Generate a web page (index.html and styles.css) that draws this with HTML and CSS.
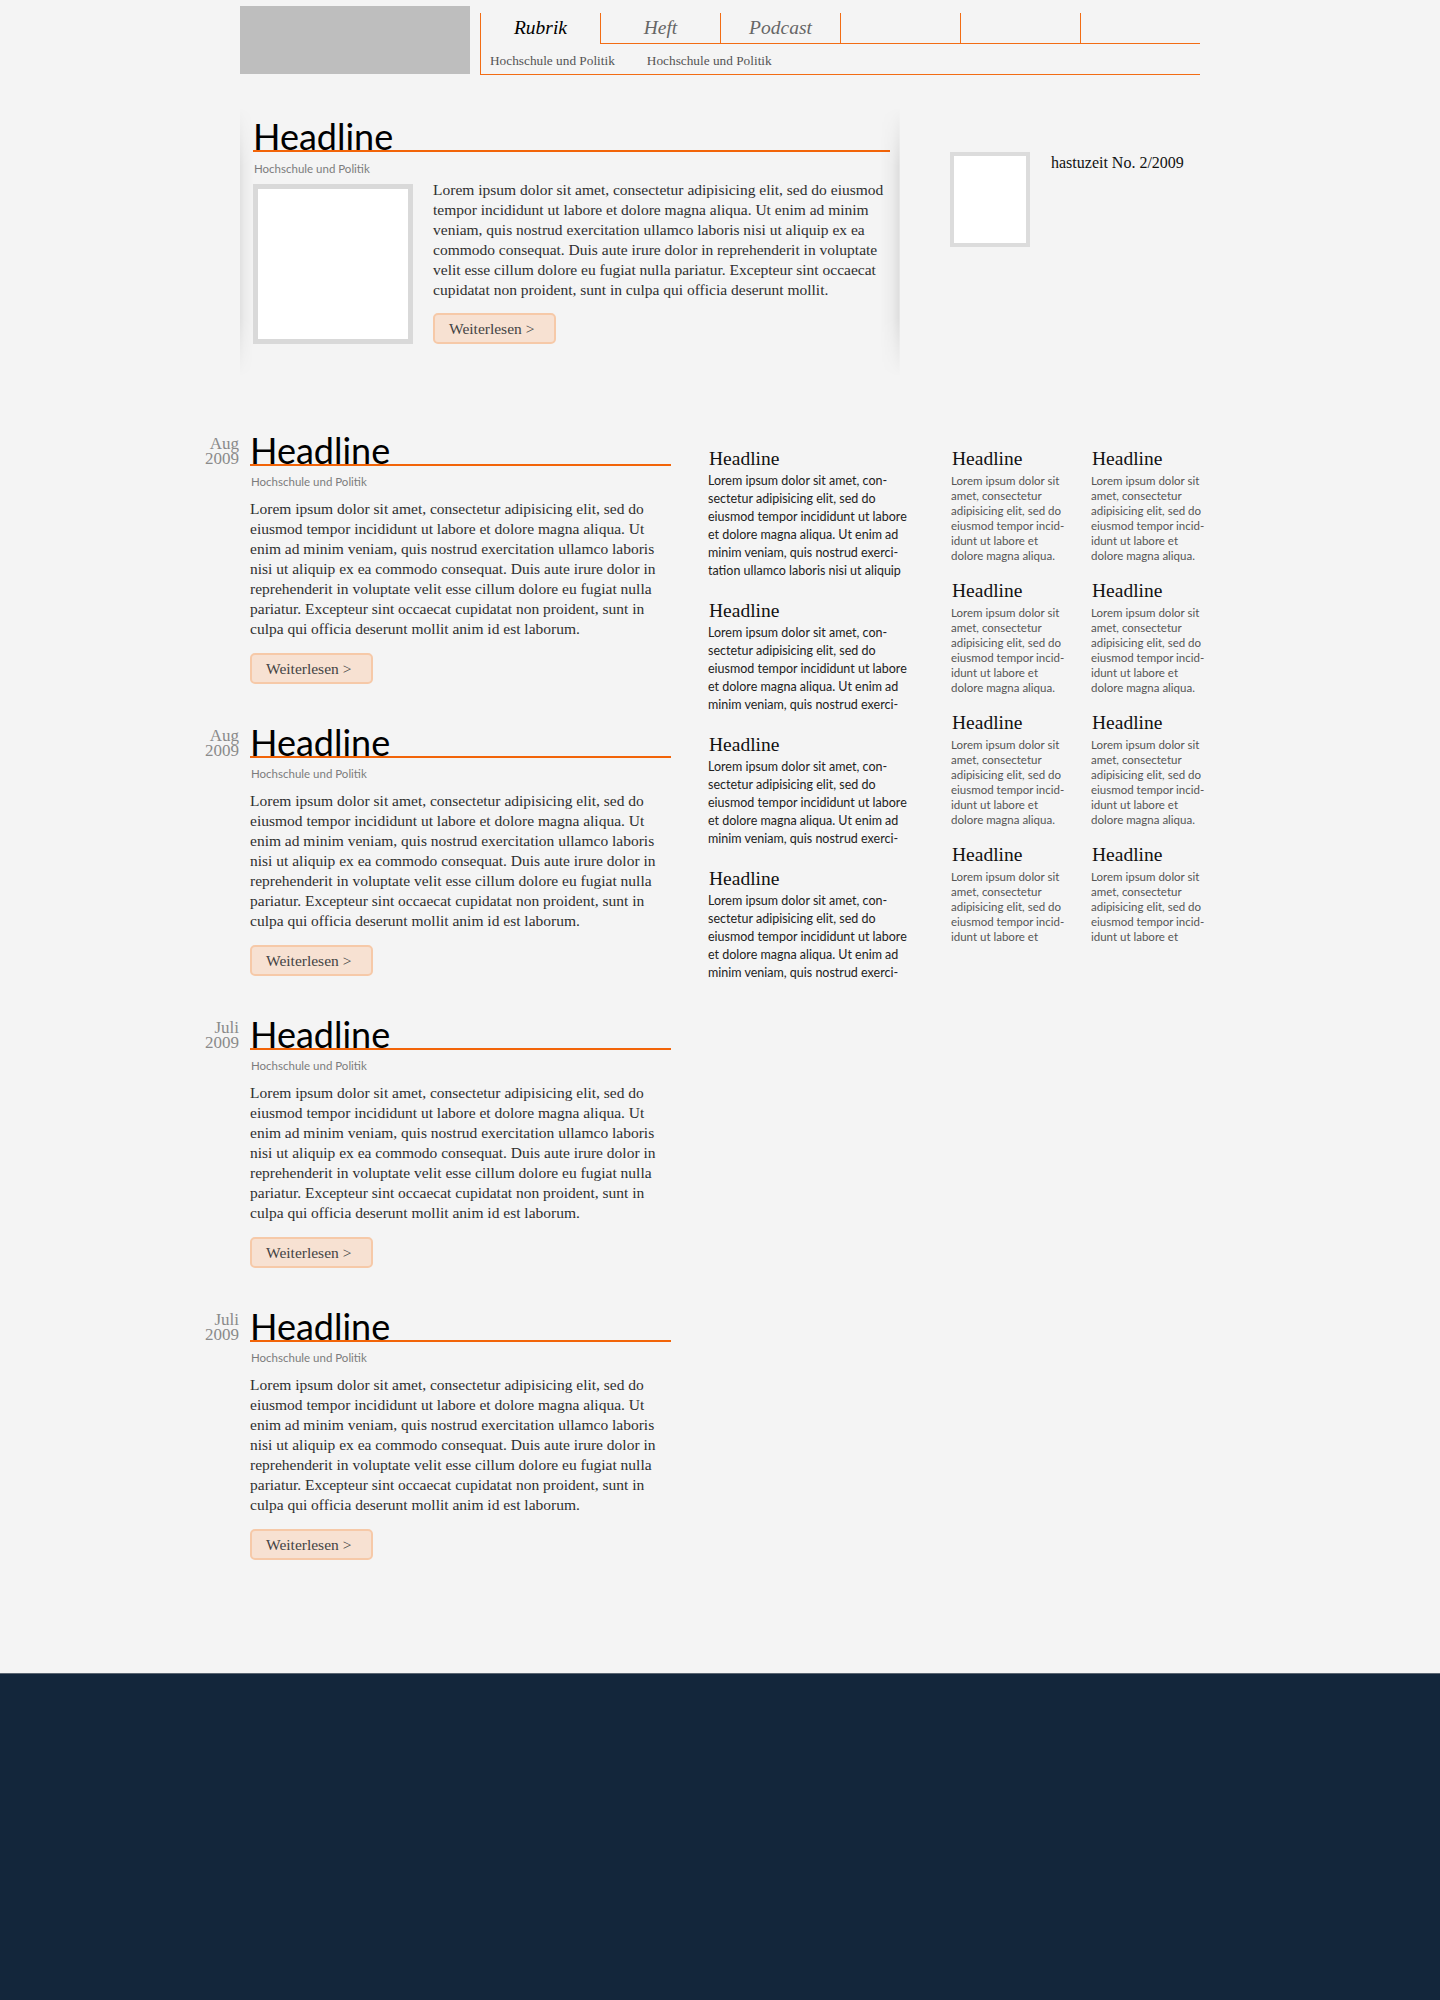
FILE: index.html
```html
<!DOCTYPE html>
<html lang="de">
<head>
<meta charset="utf-8">
<title>hastuzeit</title>
<link rel="stylesheet" href="styles.css">
</head>
<body>
<div class="page">
  <header class="masthead">
    <div class="logo"></div>
    <nav class="nav">
      <ul class="tabs">
        <li class="tab tab--active">Rubrik</li>
        <li class="tab">Heft</li>
        <li class="tab">Podcast</li>
        <li class="tab"></li>
        <li class="tab"></li>
        <li class="tab"></li>
      </ul>
      <div class="subnav">
        <a class="subnav-link">Hochschule und Politik</a>
        <a class="subnav-link">Hochschule und Politik</a>
      </div>
    </nav>
  </header>

  <section class="top">
    <article class="feature">
      <h2 class="headline">Headline</h2>
      <p class="kicker">Hochschule und Politik</p>
      <div class="feature-body">
        <div class="photo"></div>
        <div class="feature-text">
          <p class="copy">Lorem ipsum dolor sit amet, consectetur adipisicing elit, sed do eiusmod tempor incididunt ut labore et dolore magna aliqua. Ut enim ad minim veniam, quis nostrud exercitation ullamco laboris nisi ut aliquip ex ea commodo consequat. Duis aute irure dolor in reprehenderit in voluptate velit esse cillum dolore eu fugiat nulla pariatur. Excepteur sint occaecat cupidatat non proident, sunt in culpa qui officia deserunt mollit.</p>
          <a class="more">Weiterlesen &gt;</a>
        </div>
      </div>
    </article>
    <aside class="issue">
      <div class="cover"></div>
      <p class="issue-title">hastuzeit No. 2/2009</p>
    </aside>
  </section>

  <main class="main">
    <div class="stream">
      <article class="post">
        <div class="date">Aug<br>2009</div>
        <div class="post-body">
          <h2 class="headline">Headline</h2>
          <p class="kicker">Hochschule und Politik</p>
          <p class="copy">Lorem ipsum dolor sit amet, consectetur adipisicing elit, sed do eiusmod tempor incididunt ut labore et dolore magna aliqua. Ut enim ad minim veniam, quis nostrud exercitation ullamco laboris nisi ut aliquip ex ea commodo consequat. Duis aute irure dolor in reprehenderit in voluptate velit esse cillum dolore eu fugiat nulla pariatur. Excepteur sint occaecat cupidatat non proident, sunt in culpa qui officia deserunt mollit anim id est laborum.</p>
          <a class="more">Weiterlesen &gt;</a>
        </div>
      </article>
      <article class="post">
        <div class="date">Aug<br>2009</div>
        <div class="post-body">
          <h2 class="headline">Headline</h2>
          <p class="kicker">Hochschule und Politik</p>
          <p class="copy">Lorem ipsum dolor sit amet, consectetur adipisicing elit, sed do eiusmod tempor incididunt ut labore et dolore magna aliqua. Ut enim ad minim veniam, quis nostrud exercitation ullamco laboris nisi ut aliquip ex ea commodo consequat. Duis aute irure dolor in reprehenderit in voluptate velit esse cillum dolore eu fugiat nulla pariatur. Excepteur sint occaecat cupidatat non proident, sunt in culpa qui officia deserunt mollit anim id est laborum.</p>
          <a class="more">Weiterlesen &gt;</a>
        </div>
      </article>
      <article class="post">
        <div class="date">Juli<br>2009</div>
        <div class="post-body">
          <h2 class="headline">Headline</h2>
          <p class="kicker">Hochschule und Politik</p>
          <p class="copy">Lorem ipsum dolor sit amet, consectetur adipisicing elit, sed do eiusmod tempor incididunt ut labore et dolore magna aliqua. Ut enim ad minim veniam, quis nostrud exercitation ullamco laboris nisi ut aliquip ex ea commodo consequat. Duis aute irure dolor in reprehenderit in voluptate velit esse cillum dolore eu fugiat nulla pariatur. Excepteur sint occaecat cupidatat non proident, sunt in culpa qui officia deserunt mollit anim id est laborum.</p>
          <a class="more">Weiterlesen &gt;</a>
        </div>
      </article>
      <article class="post">
        <div class="date">Juli<br>2009</div>
        <div class="post-body">
          <h2 class="headline">Headline</h2>
          <p class="kicker">Hochschule und Politik</p>
          <p class="copy">Lorem ipsum dolor sit amet, consectetur adipisicing elit, sed do eiusmod tempor incididunt ut labore et dolore magna aliqua. Ut enim ad minim veniam, quis nostrud exercitation ullamco laboris nisi ut aliquip ex ea commodo consequat. Duis aute irure dolor in reprehenderit in voluptate velit esse cillum dolore eu fugiat nulla pariatur. Excepteur sint occaecat cupidatat non proident, sunt in culpa qui officia deserunt mollit anim id est laborum.</p>
          <a class="more">Weiterlesen &gt;</a>
        </div>
      </article>
    </div>

    <div class="briefs">
      <div class="brief">
        <h3 class="small-head">Headline</h3>
        <p class="brief-text">Lorem ipsum dolor sit amet, con&shy;sectetur adipisicing elit, sed do eiusmod tempor incididunt ut labore et dolore magna aliqua. Ut enim ad minim veniam, quis nostrud exerci&shy;tation ullamco laboris nisi ut aliquip</p>
      </div>
      <div class="brief">
        <h3 class="small-head">Headline</h3>
        <p class="brief-text">Lorem ipsum dolor sit amet, con&shy;sectetur adipisicing elit, sed do eiusmod tempor incididunt ut labore et dolore magna aliqua. Ut enim ad minim veniam, quis nostrud exerci-</p>
      </div>
      <div class="brief">
        <h3 class="small-head">Headline</h3>
        <p class="brief-text">Lorem ipsum dolor sit amet, con&shy;sectetur adipisicing elit, sed do eiusmod tempor incididunt ut labore et dolore magna aliqua. Ut enim ad minim veniam, quis nostrud exerci-</p>
      </div>
      <div class="brief">
        <h3 class="small-head">Headline</h3>
        <p class="brief-text">Lorem ipsum dolor sit amet, con&shy;sectetur adipisicing elit, sed do eiusmod tempor incididunt ut labore et dolore magna aliqua. Ut enim ad minim veniam, quis nostrud exerci-</p>
      </div>
    </div>

    <div class="shorts">
      <div class="short"><h3 class="small-head">Headline</h3><p class="short-text">Lorem ipsum dolor sit amet, consectetur adipisicing elit, sed do eiusmod tempor incid&shy;idunt ut labore et dolore magna aliqua.</p></div>
      <div class="short"><h3 class="small-head">Headline</h3><p class="short-text">Lorem ipsum dolor sit amet, consectetur adipisicing elit, sed do eiusmod tempor incid&shy;idunt ut labore et dolore magna aliqua.</p></div>
      <div class="short"><h3 class="small-head">Headline</h3><p class="short-text">Lorem ipsum dolor sit amet, consectetur adipisicing elit, sed do eiusmod tempor incid&shy;idunt ut labore et dolore magna aliqua.</p></div>
      <div class="short"><h3 class="small-head">Headline</h3><p class="short-text">Lorem ipsum dolor sit amet, consectetur adipisicing elit, sed do eiusmod tempor incid&shy;idunt ut labore et dolore magna aliqua.</p></div>
      <div class="short"><h3 class="small-head">Headline</h3><p class="short-text">Lorem ipsum dolor sit amet, consectetur adipisicing elit, sed do eiusmod tempor incid&shy;idunt ut labore et dolore magna aliqua.</p></div>
      <div class="short"><h3 class="small-head">Headline</h3><p class="short-text">Lorem ipsum dolor sit amet, consectetur adipisicing elit, sed do eiusmod tempor incid&shy;idunt ut labore et dolore magna aliqua.</p></div>
      <div class="short"><h3 class="small-head">Headline</h3><p class="short-text">Lorem ipsum dolor sit amet, consectetur adipisicing elit, sed do eiusmod tempor incid&shy;idunt ut labore et</p></div>
      <div class="short"><h3 class="small-head">Headline</h3><p class="short-text">Lorem ipsum dolor sit amet, consectetur adipisicing elit, sed do eiusmod tempor incid&shy;idunt ut labore et</p></div>
    </div>
  </main>
</div>
<footer class="footer"></footer>
</body>
</html>
```

FILE: styles.css
```css
* { box-sizing: border-box; }

html, body {
  margin: 0;
  padding: 0;
}

body {
  background: #f4f4f4;
  font-family: "Liberation Serif", "Times New Roman", serif;
  color: #333;
}

p { margin: 0; }

.page {
  width: 960px;
  margin: 0 auto;
}

/* ---------- masthead ---------- */
.masthead {
  display: flex;
  align-items: flex-start;
  padding-top: 6px;
}

.logo {
  flex: none;
  width: 230px;
  height: 68px;
  background: #bebebe;
}

.nav {
  margin: 7px 0 0 10px;
  flex: 1;
  border-left: 1px solid #f26c14;
  border-bottom: 1px solid #f26c14;
}

.tabs {
  list-style: none;
  margin: 0;
  padding: 0;
  display: flex;
}

.tab {
  flex: none;
  width: 120px;
  height: 31px;
  line-height: 30px;
  border-bottom: 1px solid #f26c14;
  border-left: 1px solid #f26c14;
  text-align: center;
  font-style: italic;
  font-size: 19.5px;
  color: #666;
}

.tab--active {
  border-left: 0;
  border-bottom-color: transparent;
  width: 119px;
  color: #000;
}

.tab:last-child { flex: 1; }

.subnav {
  height: 30px;
  padding: 5px 0 0 9px;
  line-height: 24px;
  font-size: 13.3px;
  color: #555;
  display: flex;
  gap: 32px;
}

/* ---------- top feature ---------- */
.top {
  display: flex;
  align-items: flex-start;
  margin-top: 32px;
}

.feature {
  flex: none;
  position: relative;
  width: 660px;
  height: 270px;
  padding: 15px 10px 0 13px;
}

.feature::before {
  content: "";
  position: absolute;
  inset: 0;
  pointer-events: none;
  background: linear-gradient(to right,
      rgba(0,0,0,0.075) 0px,
      rgba(0,0,0,0.03) 5px,
      rgba(0,0,0,0) 14px,
      rgba(0,0,0,0) calc(100% - 20px),
      rgba(0,0,0,0.03) calc(100% - 8px),
      rgba(0,0,0,0.085) calc(100% - 1px),
      rgba(0,0,0,0.02) 100%);
  -webkit-mask-image: linear-gradient(to bottom, transparent 0, #000 22%, #000 78%, transparent 100%);
  mask-image: linear-gradient(to bottom, transparent 0, #000 22%, #000 78%, transparent 100%);
}

.headline {
  margin: 0;
  font-family: Lato, "Open Sans", sans-serif;
  font-weight: 400;
  font-size: 36px;
  line-height: 28px;
  color: #000;
  border-bottom: 2px solid #f26408;
}

.kicker {
  margin-top: 9px;
  font-family: Lato, "Open Sans", sans-serif;
  font-size: 11.5px;
  line-height: 14px;
  color: #7c7c7c;
  padding-left: 1px;
}

.feature .kicker { margin-top: 10px; }

.feature-body {
  display: flex;
  align-items: flex-start;
  gap: 20px;
  margin-top: 4px;
}

.photo {
  flex: none;
  width: 160px;
  height: 160px;
  margin-top: 4px;
  background: #fff;
  border: 5px solid #d9d9d9;
}

.feature-text { flex: 1; }

.copy {
  font-size: 15.5px;
  line-height: 20px;
  color: #2f2f2f;
}

.more {
  display: inline-block;
  margin-top: 13px;
  width: 123px;
  height: 31px;
  padding-left: 14px;
  line-height: 27px;
  border: 2px solid #f6c9a8;
  border-radius: 5px;
  background: #f7e1d2;
  color: #444;
  font-size: 15.5px;
}

.post .more { margin-top: 14px; }

.issue {
  flex: none;
  display: flex;
  align-items: flex-start;
  gap: 21px;
  margin: 45px 0 0 50px;
}

.cover {
  flex: none;
  width: 80px;
  height: 95px;
  background: #fff;
  border: 4px solid #dcdcdc;
}

.issue-title {
  margin-top: 1px;
  font-size: 16px;
  line-height: 20px;
  color: #111;
}

/* ---------- main ---------- */
.main {
  display: flex;
  align-items: flex-start;
  margin-top: 59px;
  padding-bottom: 113px;
}

.stream {
  flex: none;
  width: 471px;
  margin-left: -40px;
  display: flex;
  flex-direction: column;
  gap: 44px;
}

.post {
  display: grid;
  grid-template-columns: 39px 421px;
  column-gap: 11px;
  align-items: start;
}

.date {
  text-align: right;
  font-size: 17px;
  line-height: 15px;
  color: #8a8a8a;
}

.post .copy { margin-top: 10px; }

.briefs {
  flex: none;
  width: 205px;
  margin-left: 37px;
  padding-top: 12px;
}

.brief { margin-bottom: 20px; }

.small-head {
  margin: 0;
  font-weight: 400;
  font-size: 19.5px;
  line-height: 22px;
  color: #111;
  padding-left: 1px;
}

.brief-text {
  margin-top: 2px;
  font-family: Lato, "Open Sans", sans-serif;
  font-size: 12.5px;
  line-height: 18px;
  color: #222;
}

.shorts {
  flex: none;
  margin-left: 38px;
  padding-top: 12px;
  display: grid;
  grid-template-columns: 140px 116px;
  row-gap: 17px;
}

.short { width: 116px; }

.short-text {
  margin-top: 3px;
  font-family: Lato, "Open Sans", sans-serif;
  font-size: 11.5px;
  line-height: 15px;
  color: #555;
}

/* ---------- footer ---------- */
.footer {
  height: 327px;
  background: #13263b;
  border-top: 1px solid #5a6572;
}
```
